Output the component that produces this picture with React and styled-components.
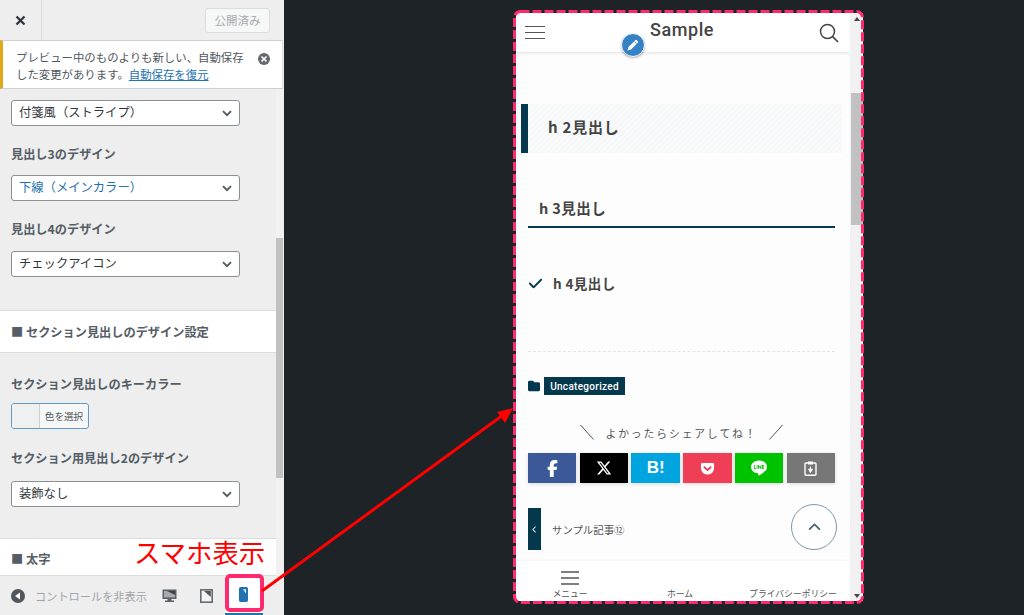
import React from "react";
import styled, { createGlobalStyle } from "styled-components";
import { FaFacebookF, FaXTwitter, FaGetPocket, FaCheck, FaFolder, FaChevronLeft, FaChevronUp } from "react-icons/fa6";
import { SiLine } from "react-icons/si";

const Global = createGlobalStyle`
  html, body { margin: 0; padding: 0; width: 1024px; height: 615px; overflow: hidden; background: #1d2327; }
  * { box-sizing: border-box; }
  body { font-family: "Noto Sans CJK JP", "Noto Sans", sans-serif; }
`;
const Screen = styled.div`
  position: relative; width: 1024px; height: 615px; display: flex; background: #1d2327; overflow: hidden;
`;
const Sidebar = styled.aside`
  width: 284px; height: 615px; display: flex; flex-direction: column; background: #eee; flex: none; color: #50575e;
`;
const Header = styled.header`
  height: 40px; flex: none; display: flex; align-items: center; justify-content: space-between; padding-right: 14px;
`;
const CloseBtn = styled.div`
  width: 42px; height: 40px; border-right: 1px solid #ddd; display: flex; align-items: center; justify-content: center;
`;
const Published = styled.div`
  width: 65px; height: 25px; border: 1px solid #dcdcde; border-radius: 3px; background: #f6f7f7; color: #a7aaad;
  font-size: 11.5px; display: flex; align-items: center; justify-content: center;
`;
const Notice = styled.div`
  height: 49px; flex: none; width: 283px; background: #fff; border: 1px solid #ccd0d4; border-left: 3px solid #dfa91d; border-right-color: #ddd;
  display: flex; padding: 8px 0 0 13px; position: relative; font-size: 11.4px; line-height: 17px; color: #50575e;
`;
const NoticeLink = styled.span` color: #2271b1; text-decoration: underline; `;
const Dismiss = styled.span`
  position: absolute; right: 12px; top: 12px; width: 12px; height: 12px; border-radius: 50%; background: #646970; color: #fff;
  display: flex; align-items: center; justify-content: center;
`;
const SideBody = styled.div` flex: 1; display: flex; min-height: 0; `;
const Controls = styled.div` width: 276px; display: flex; flex-direction: column; overflow: hidden; `;
const SideTrack = styled.div` width: 7px; background: #f1f1f1; padding-top: 149px; `;
const SideThumb = styled.div` height: 240px; background: #c1c1c1; `;
const Control = styled.div` padding: 0 11px; margin-top: ${p => p.$top || 0}px; `;
const Label = styled.div`
  font-size: 12.2px; line-height: 17px; font-weight: 700; color: #555d66; margin-bottom: ${p => p.$mb}px; white-space: nowrap;
`;
const Select = styled.div`
  width: 229px; height: 26px; background: #fff; border: 1px solid #8c8f94; border-radius: 3px; display: flex; align-items: center;
  justify-content: space-between; padding: 0 7px; font-size: 12.3px; color: ${p => p.$blue ? "#2271b1" : "#32373c"};
  span { position: relative; top: -1px; }
`;
const SectionHead = styled.div`
  height: ${p => p.$h}px; background: #fff; border-top: 1px solid #ddd; border-bottom: ${p => p.$open ? 0 : "1px solid #ddd"};
  margin-top: ${p => p.$top}px; padding: ${p => p.$open ? "4px" : 0} 0 0 11px; display: flex; align-items: center; font-size: 12.2px; font-weight: 700; color: #555d66; flex: none;
`;
const ColorBtn = styled.div`
  width: 78px; height: 26px; border: 1px solid #5f9ccb; border-radius: 3px; display: flex; background: #f6f7f7; overflow: hidden;
`;
const Swatch = styled.div` width: 28px; border-right: 1px solid #ccd0d4; background: #f0f0f1; `;
const SwatchText = styled.div` flex: 1; font-size: 9.6px; color: #50575e; display: flex; align-items: center; justify-content: center; `;
const Footer = styled.footer`
  height: 40px; width: 276px; flex: none; display: flex; align-items: center; border-top: 1px solid #ddd; background: #eee; padding-left: 11px; position: relative;
`;
const Collapse = styled.span`
  font-size: 11.2px; color: #a0a5aa; width: 113px; margin: 0 3.5px 0 10px; white-space: nowrap; flex: none;
`;
const DeviceIcon = styled.div`
  width: ${p => p.$active ? 38 : 36.5}px; height: 40px; flex: none; display: flex; align-items: center; justify-content: center;
  ${p => p.$active && "background:#fff; border-bottom: 3px solid #2271b1;"}
`;
const Preview = styled.main` flex: 1; padding: 10px 0 0 229px; `;
const Phone = styled.div`
  position: relative; width: 351px; height: 594px; padding: 3px 1px 3px 3px; display: flex;
`;
const Page = styled.div`
  width: 334px; height: 588px; display: flex; flex-direction: column; background: #fdfdfd; position: relative; overflow: hidden; color: #444;
`;
const Nav = styled.div`
  height: 39px; flex: none; background: #fff; box-shadow: 0 1px 3px rgba(0,0,0,.12); display: flex; align-items: center; justify-content: space-between;
  padding: 0 11px 0 9px; position: relative;
`;
const Logo = styled.div`
  font-family: Roboto, sans-serif; font-weight: 500; font-size: 18px; letter-spacing: .55px; color: #444; position: relative; top: -3px;
`;
const Article = styled.div` flex: 1; padding: 0 15px 0 12px; min-height: 0; `;
const H2 = styled.h2`
  margin: 52px -7px 0 -7px; height: 49px; border-left: 7px solid #04384c; padding: 0 0 5px 20px; display: flex; align-items: center; font-size: 15px; font-weight: 700; color: #444;
  letter-spacing: .8px; background: repeating-linear-gradient(-45deg, #f5f7f8, #f5f7f8 2px, #f9fafa 2px, #f9fafa 4px);
`;
const H3 = styled.h3`
  margin: 40px 0 0; height: 35px; padding: 2px 0 0 11px; border-bottom: 2px solid #04384c; font-size: 14.5px; line-height: 26px; font-weight: 700; color: #444; letter-spacing: .4px;
`;
const H4 = styled.h4`
  margin: 43px 0 0; height: 24px; display: flex; align-items: center; gap: 10px; font-size: 13.5px; font-weight: 700; color: #444; letter-spacing: .4px;
  svg { color: #04384c; }
`;
const Divider = styled.div` margin-top: 56px; border-top: 1px dashed #e4e4e4; `;
const Cat = styled.div` margin-top: 25px; height: 18px; display: flex; align-items: center; gap: 4px; color: #04384c; `;
const Tag = styled.span`
  height: 18px; width: 81px; background: #04384c; color: #fff; font: 500 10px Roboto, sans-serif; letter-spacing: .3px; display: flex; align-items: center; justify-content: center;
`;
const ShareTitle = styled.div`
  margin-top: 26px; height: 24px; display: flex; align-items: center; justify-content: center; gap: 11px; font-size: 10.8px; letter-spacing: 1.9px; color: #555;
`;
const Slash = styled.svg` width: 14px; height: 18px; flex: none; `;
const Share = styled.div` margin-top: 8px; display: grid; grid-template-columns: repeat(6, 1fr); column-gap: 3.4px; `;
const ShareBtn = styled.div`
  height: 30px; background: ${p => p.$c}; color: #fff; display: flex; align-items: center; justify-content: center; box-shadow: 0 1px 4px rgba(0,0,0,.15);
  font: 800 17px "Liberation Sans", sans-serif;
`;
const Prev = styled.div` margin-top: 25px; height: 42px; display: flex; align-items: center; `;
const PrevBox = styled.div` width: 13px; height: 42px; background: #04384c; color: #fff; display: flex; align-items: center; justify-content: center; `;
const PrevText = styled.span` margin-left: 11px; font-size: 10.4px; color: #555; `;
const TopBtn = styled.div`
  position: absolute; left: 275px; top: 491px; width: 46px; height: 46px; border: 1px solid #7a99a5; border-radius: 50%; background: #fff;
  display: flex; align-items: center; justify-content: center; color: #3f6070;
`;
const Pen = styled.div`
  position: absolute; left: 105px; top: 20px; width: 24px; height: 24px; border-radius: 50%; background: #3582c4; border: 1px solid #fff;
  box-shadow: 0 1px 2px rgba(0,0,0,.3); display: flex; align-items: center; justify-content: center;
`;
const BottomNav = styled.div`
  height: 40px; flex: none; background: #fff; display: grid; grid-template-columns: 108px 112px 114px; box-shadow: 0 -1px 2px rgba(0,0,0,.04);
`;
const BottomItem = styled.div`
  display: flex; flex-direction: column; align-items: center; justify-content: flex-end; font-size: 8.8px; line-height: 12px; color: #555; padding-bottom: 1px; white-space: nowrap;
  svg { margin-bottom: 3px; }
`;
const Track = styled.div`
  width: 13px; height: 588px; background: #f1f1f1; flex: none; display: flex; flex-direction: column; align-items: center;
`;
const Arrow = styled.div`
  width: 0; height: 0; border-left: 3px solid transparent; border-right: 3px solid transparent;
  ${p => p.$up ? "border-bottom: 4px solid #444; margin-top: 4px;" : "border-top: 4px solid #444; margin-top: auto; margin-bottom: 3px;"}
`;
const Thumb = styled.div` width: 12px; height: 132px; margin-left: 1px; background: #c1c1c1; margin-top: 72px; `;
const Overlay = styled.svg` position: absolute; left: 0; top: 0; pointer-events: none; `;
const Callout = styled.div`
  position: absolute; left: 134px; top: 535px; font-size: 26.4px; line-height: 34px; color: #f00; white-space: nowrap; font-weight: 400;
`;
const Highlight = styled.div`
  position: absolute; left: 225px; top: 574px; width: 39px; height: 38px; border: 4px solid #ff2a6d; border-radius: 5px;
`;

const Chevron = () => (
  <svg width="10" height="7" viewBox="0 0 10 7"><path d="M1 1.2 5 5.2 9 1.2" fill="none" stroke="#50575e" strokeWidth="1.8" /></svg>
);
const SelectBox = ({ children, blue }) => <Select $blue={blue}><span>{children}</span><Chevron /></Select>;

export default function App() {
  return (
    <Screen>
      <Global />
      <Sidebar>
        <Header>
          <CloseBtn>
            <svg width="11" height="11" viewBox="0 0 11 11"><path d="M1.5 1.5 9.5 9.5M9.5 1.5 1.5 9.5" stroke="#2c3338" strokeWidth="2.2" /></svg>
          </CloseBtn>
          <Published>公開済み</Published>
        </Header>
        <Notice>
          <div>プレビュー中のものよりも新しい、自動保存<br />した変更があります。<NoticeLink>自動保存を復元</NoticeLink></div>
          <Dismiss><svg width="8" height="8" viewBox="0 0 8 8"><path d="M1.5 1.5 6.5 6.5M6.5 1.5 1.5 6.5" stroke="#fff" strokeWidth="1.6" /></svg></Dismiss>
        </Notice>
        <SideBody>
          <Controls>
            <Control $top={11}><SelectBox>付箋風（ストライプ）</SelectBox></Control>
            <Control $top={20}><Label $mb={12}>見出し3のデザイン</Label><SelectBox blue>下線（メインカラー）</SelectBox></Control>
            <Control $top={20}><Label $mb={13}>見出し4のデザイン</Label><SelectBox>チェックアイコン</SelectBox></Control>
            <SectionHead $top={33} $h={43}>■ セクション見出しのデザイン設定</SectionHead>
            <Control $top={23}>
              <Label $mb={10}>セクション見出しのキーカラー</Label>
              <ColorBtn><Swatch /><SwatchText>色を選択</SwatchText></ColorBtn>
            </Control>
            <Control $top={21}><Label $mb={14}>セクション用見出し2のデザイン</Label><SelectBox>装飾なし</SelectBox></Control>
            <SectionHead $top={31} $h={37} $open>■ 太字</SectionHead>
          </Controls>
          <SideTrack><SideThumb /></SideTrack>
        </SideBody>
        <Footer>
          <svg width="14" height="14" viewBox="0 0 14 14"><circle cx="7" cy="7" r="7" fill="#50575e" /><path d="M9 3.5v7L4 7z" fill="#fff" /></svg>
          <Collapse>コントロールを非表示</Collapse>
          <DeviceIcon>
            <svg width="15" height="14" viewBox="0 0 15 14"><path d="M0.5 0.5h14v9.5h-5v1.6h2.5v1.4h-9v-1.4h2.5V10h-5z" fill="#5c6166" /><rect x="2" y="2" width="11" height="6.4" fill="#a8abae" /><path d="M5 2h8v4z" fill="#3f4448" /></svg>
          </DeviceIcon>
          <DeviceIcon>
            <svg width="13" height="14" viewBox="0 0 13 14"><rect x=".8" y=".8" width="11.4" height="12.4" fill="#f4f4f4" stroke="#666b70" strokeWidth="1.6" /><path d="M10.8 2v6L4 2z" fill="#50575e" /></svg>
          </DeviceIcon>
          <DeviceIcon $active>
            <svg width="9" height="15" viewBox="0 0 9 15"><rect x=".8" y=".8" width="7.4" height="13.4" rx="1" fill="#2271b1" stroke="#2271b1" strokeWidth="1.6" /><path d="M4 2.2h3v4.2z" fill="#e4eff7" /></svg>
          </DeviceIcon>
        </Footer>
      </Sidebar>
      <Preview>
        <Phone>
          <Page>
            <Nav>
              <svg width="20" height="15" viewBox="0 0 20 15"><path d="M0 1.5h20M0 7.5h20M0 13.5h20" stroke="#555" strokeWidth="1.2" /></svg>
              <Logo>Sample</Logo>
              <svg width="20" height="20" viewBox="0 0 20 20"><circle cx="8.5" cy="8.5" r="7" fill="none" stroke="#444" strokeWidth="1.5" /><path d="M13.6 13.6 19 19" stroke="#444" strokeWidth="1.7" /></svg>
            </Nav>
            <Article>
              <H2>h 2見出し</H2>
              <H3>h 3見出し</H3>
              <H4><FaCheck size={15} />h 4見出し</H4>
              <Divider />
              <Cat><FaFolder size={12} /><Tag>Uncategorized</Tag></Cat>
              <ShareTitle>
                <Slash viewBox="0 0 14 18"><path d="M.5 1 13.5 15.5" stroke="#555" /></Slash>
                よかったらシェアしてね！
                <Slash viewBox="0 0 14 18"><path d="M13.5 1 .5 15.5" stroke="#555" /></Slash>
              </ShareTitle>
              <Share>
                <ShareBtn $c="#3b5998"><FaFacebookF size={17} /></ShareBtn>
                <ShareBtn $c="#000"><FaXTwitter size={16} /></ShareBtn>
                <ShareBtn $c="#00a4de">B!</ShareBtn>
                <ShareBtn $c="#ef3f56"><FaGetPocket size={15} /></ShareBtn>
                <ShareBtn $c="#00c300"><SiLine size={16} /></ShareBtn>
                <ShareBtn $c="#777">
                  <svg width="13" height="15" viewBox="0 0 13 15"><rect x="1" y="2" width="11" height="12.2" rx="1" fill="none" stroke="#fff" strokeWidth="1.4" /><rect x="4" y=".5" width="5" height="3" fill="#fff" /><path d="M6.5 5.5v4M4.6 8.2 6.5 11.5l1.9-3.3z" stroke="#fff" fill="#fff" /></svg>
                </ShareBtn>
              </Share>
              <Prev><PrevBox><FaChevronLeft size={7} /></PrevBox><PrevText>サンプル記事⑫</PrevText></Prev>
            </Article>
            <BottomNav>
              <BottomItem>
                <svg width="18" height="14" viewBox="0 0 18 14"><path d="M0 1h18M0 7h18M0 13h18" stroke="#555" strokeWidth="1.3" /></svg>
                メニュー
              </BottomItem>
              <BottomItem>ホーム</BottomItem>
              <BottomItem>プライバシーポリシー</BottomItem>
            </BottomNav>
            <TopBtn><FaChevronUp size={13} /></TopBtn>
            <Pen>
              <svg width="14" height="14" viewBox="0 0 14 14"><path d="M1.5 12.5l1-3.6 6.7-6.7a1.1 1.1 0 0 1 1.6 0l1 1a1.1 1.1 0 0 1 0 1.6L5.1 11.5z" fill="#fff" /><path d="M8.2 3.4l2.4 2.4" stroke="#3582c4" strokeWidth=".9" /></svg>
            </Pen>
          </Page>
          <Track><Arrow $up /><Thumb /><Arrow /></Track>
          <Overlay width="351" height="594" viewBox="0 0 351 594">
            <rect x="1.5" y="1.5" width="348" height="591" rx="6" fill="none" stroke="#ff2a6d" strokeWidth="3" strokeDasharray="9 3" />
          </Overlay>
        </Phone>
      </Preview>
      <Callout>スマホ表示</Callout>
      <Highlight />
      <Overlay width="1024" height="615" viewBox="0 0 1024 615">
        <path d="M262 591 503 415" stroke="#f00" strokeWidth="3" fill="none" />
        <path d="M513 408 497 412 505 423z" fill="#f00" />
      </Overlay>
    </Screen>
  );
}
